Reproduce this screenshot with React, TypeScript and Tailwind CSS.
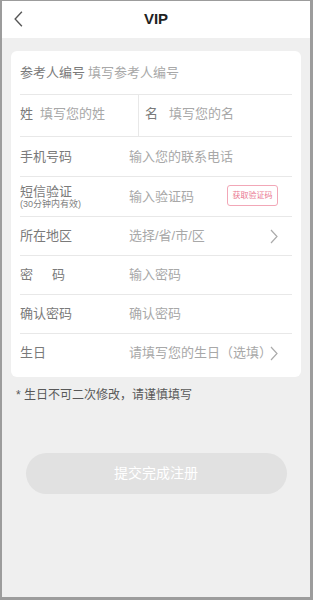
import React from 'react';

const font = { fontFamily: '"Liberation Sans", "Noto Sans CJK SC", sans-serif' };

function Chevron({ className }: { className?: string }) {
  return (
    <svg viewBox="0 0 8 15" className={className} fill="none" stroke="currentColor" strokeWidth="1.2">
      <path d="M1 1l6 6.5L1 14" />
    </svg>
  );
}

function Row({ label, placeholder, h, border = true, right }: {
  label: React.ReactNode;
  placeholder: string;
  h: string;
  border?: boolean;
  right?: React.ReactNode;
}) {
  return (
    <div className={`flex items-center ${h} ${border ? 'border-b border-[#e8e8e8]' : ''}`}>
      <div className="w-[109px] shrink-0 text-[13px] text-[#7a7a7a]">{label}</div>
      <div className="flex-1 text-[13px] text-[#a8a8a8]">{placeholder}</div>
      {right}
    </div>
  );
}

export default function App() {
  return (
    <div
      style={font}
      className="h-[600px] w-[313px] overflow-hidden border-t border-l-2 border-r-[3px] border-b-[3px] border-[#9c9c9c] bg-[#efefef]"
    >
      <header className="relative flex h-[37px] items-center justify-center bg-white">
        <Chevron className="absolute left-[12px] top-[9px] h-[18px] w-[9px] rotate-180 text-[#555]" />
        <h1 className="text-[15px] font-bold text-[#222]">VIP</h1>
      </header>

      <div className="mx-[9px] mt-[13px] rounded-md bg-white px-[9px] pb-[5px]">
        <div className="flex h-[44px] items-center border-b border-[#e8e8e8] text-[13px]">
          <span className="text-[#7a7a7a]">参考人编号</span>
          <span className="ml-[3px] text-[#a8a8a8]">填写参考人编号</span>
        </div>
        <div className="flex h-[42px] border-b border-[#e8e8e8] text-[13px]">
          <div className="flex w-[119px] items-center pb-[4px] border-r border-[#e8e8e8]">
            <span className="text-[#7a7a7a]">姓</span>
            <span className="ml-[7px] text-[#a8a8a8]">填写您的姓</span>
          </div>
          <div className="flex items-center pb-[4px] pl-[6px]">
            <span className="text-[#7a7a7a]">名</span>
            <span className="ml-[11px] text-[#a8a8a8]">填写您的名</span>
          </div>
        </div>
        <Row h="h-[40px]" label="手机号码" placeholder="输入您的联系电话" />
        <Row
          h="h-[40px]"
          label={
            <div className="leading-[15px]">
              <div>短信验证</div>
              <div className="text-[9px] leading-[11px] text-[#808080]">(30分钟内有效)</div>
            </div>
          }
          placeholder="输入验证码"
          right={
            <div className="mr-[14px] mb-[2px] flex h-[21px] w-[51px] items-center justify-center rounded-[3px] border border-[#f2a7b7] text-[8px] text-[#ea7891]">
              获取验证码
            </div>
          }
        />
        <Row
          h="h-[39px]"
          label="所在地区"
          placeholder="选择/省/市/区"
          right={<Chevron className="mr-[14px] h-[15px] w-[8px] text-[#ababab]" />}
        />
        <Row h="h-[39px]" label={<span>密<span className="ml-[19px]">码</span></span>} placeholder="输入密码" />
        <Row h="h-[39px]" label="确认密码" placeholder="确认密码" />
        <Row
          h="h-[38px]"
          border={false}
          label="生日"
          placeholder="请填写您的生日（选填）"
          right={<Chevron className="mr-[14px] h-[15px] w-[8px] text-[#ababab]" />}
        />
      </div>

      <p className="mt-[9px] ml-[14px] text-[12px] text-[#585858]">* 生日不可二次修改，请谨慎填写</p>

      <div className="mt-[49px] flex justify-center">
        <button className="h-[41px] w-[261px] rounded-full bg-[#e1e1e1] text-[14px] text-white">提交完成注册</button>
      </div>
    </div>
  );
}
